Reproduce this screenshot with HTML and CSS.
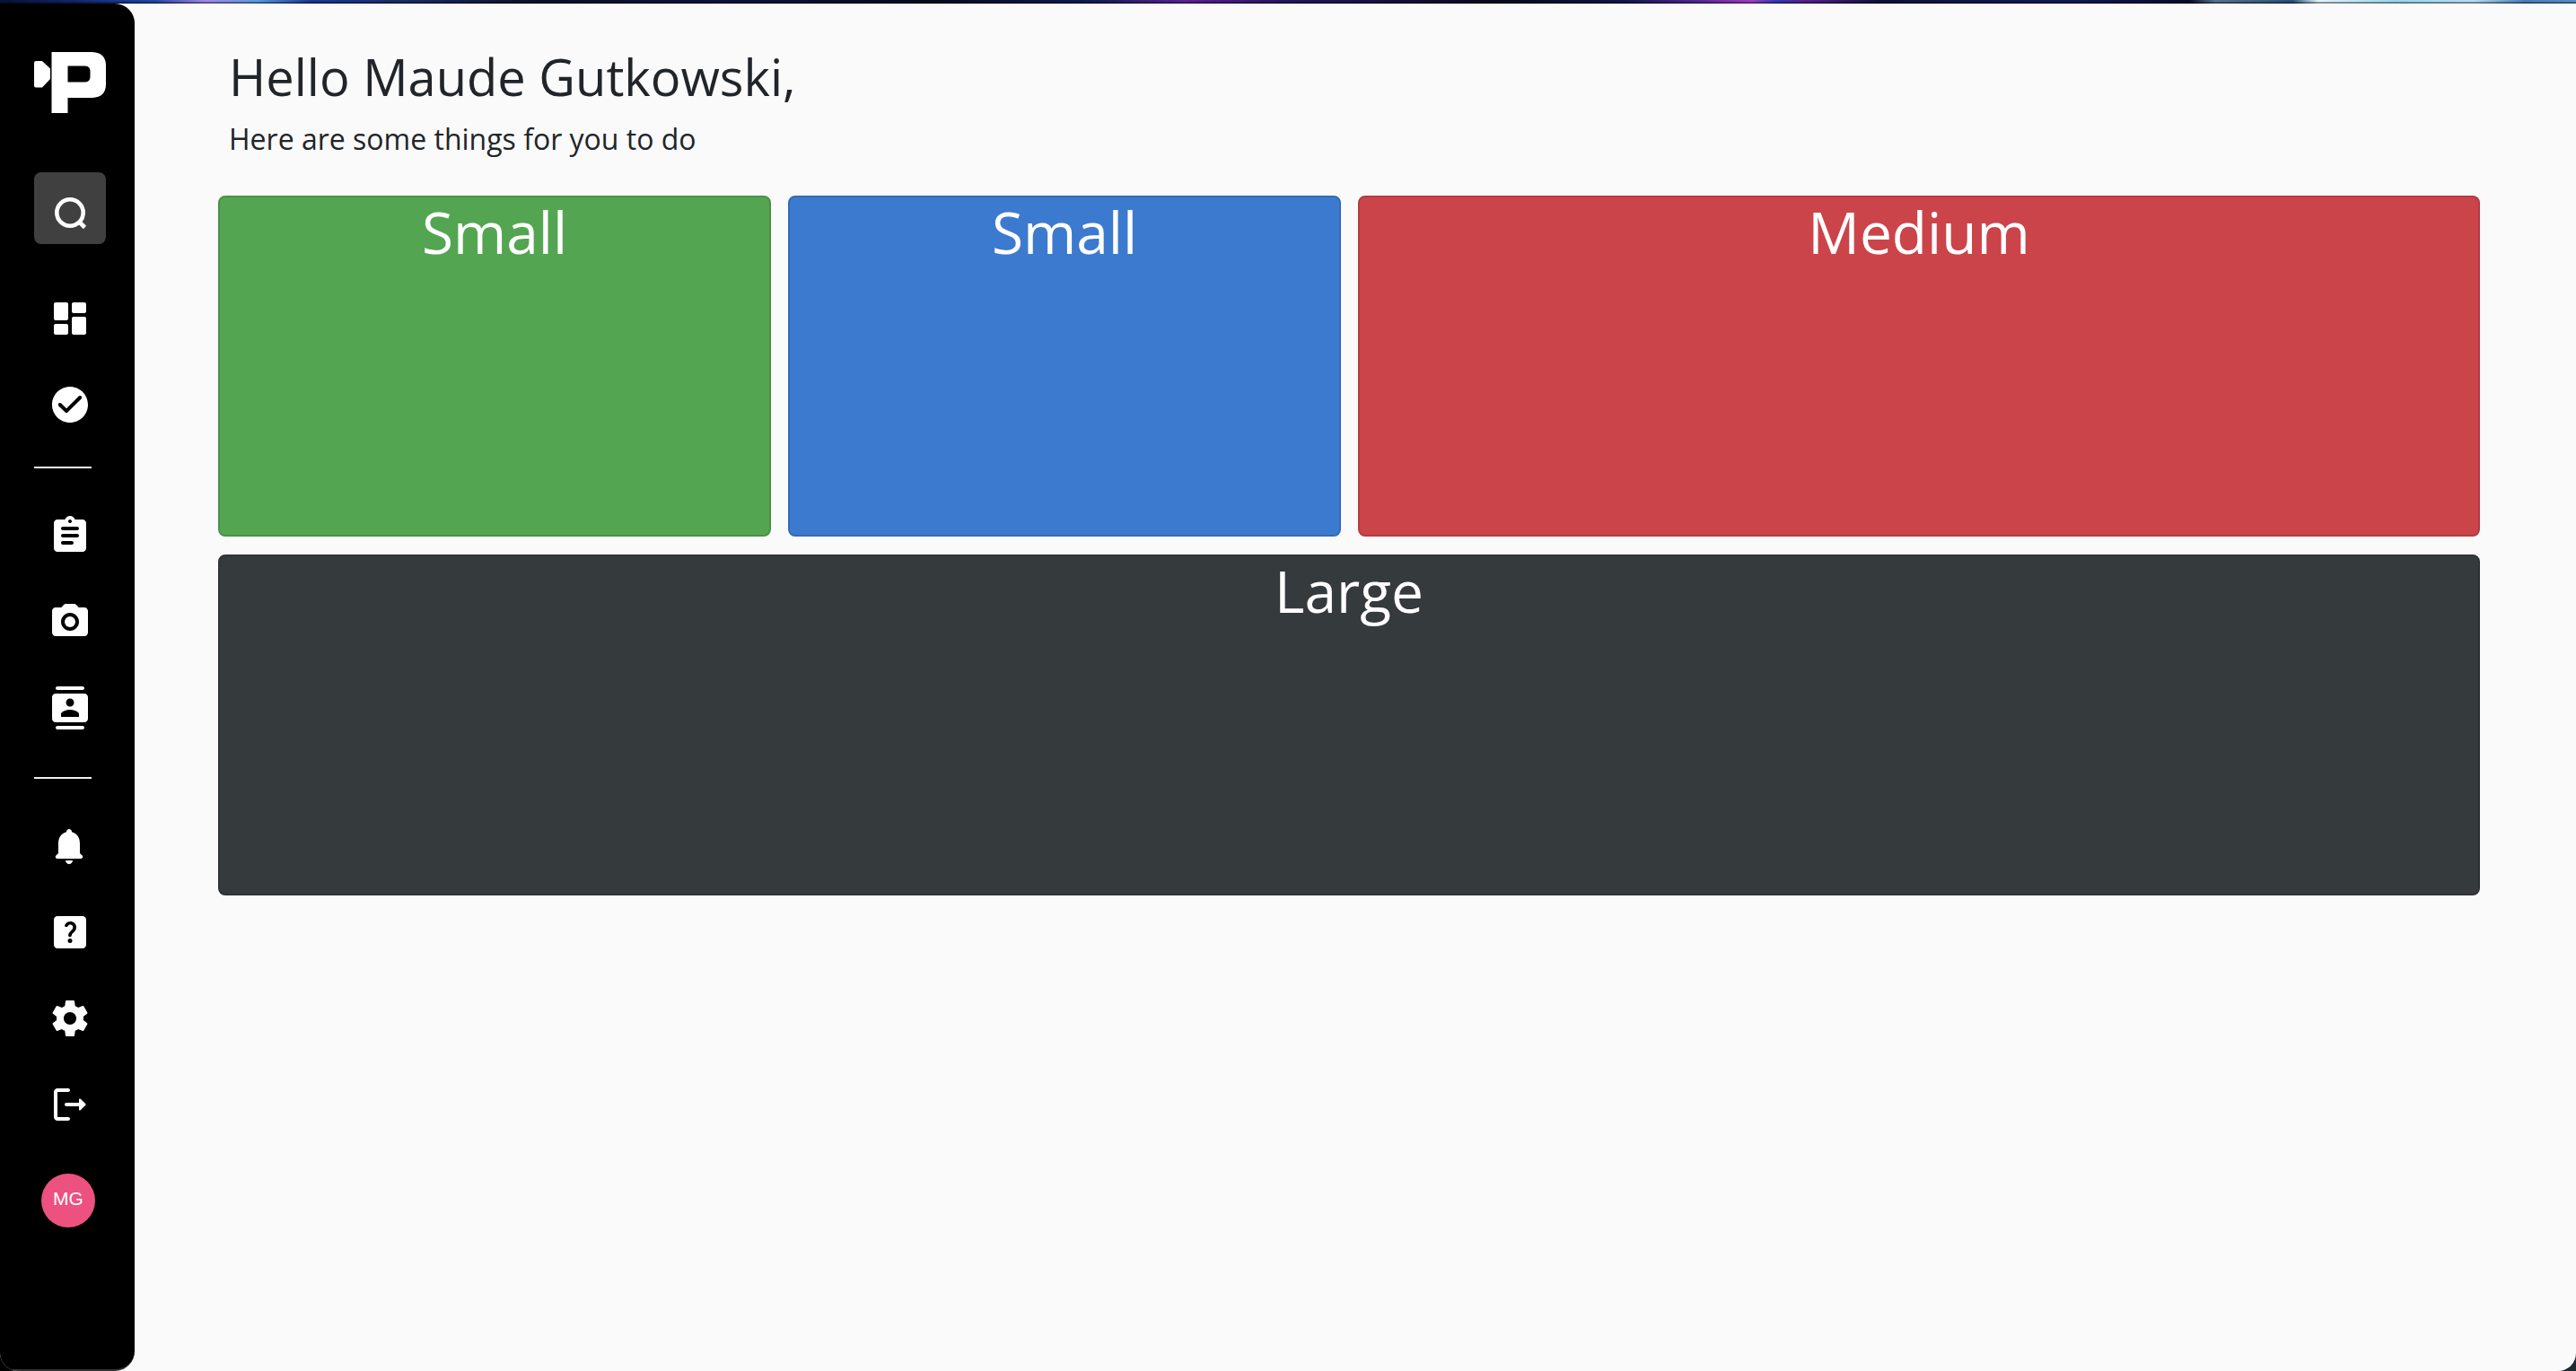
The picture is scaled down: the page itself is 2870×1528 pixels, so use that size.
FILE: index.html
```html
<!DOCTYPE html>
<html lang="en">
<head>
<meta charset="utf-8">
<title>Dashboard</title>
<link rel="stylesheet" href="styles.css">
</head>
<body>
<div class="window">
  <nav class="sidebar" aria-label="Main">
    <a class="logo" href="#" aria-label="Home">
      <svg viewBox="0 0 80 68" width="80" height="68"><path fill="#fff" d="M2 10h7l9 8.500V30L9 39.500H2Q0 39.500 0 37.500V12Q0 10 2 10zM19.500 0H65Q80 1 80 15V36Q80 50 65 51H37.500V68H19.500zM37.500 15.500V33.500H57Q62.500 33 62.500 27.500V21Q62.500 16 57 15.500z" fill-rule="evenodd"/></svg>
    </a>
    <button class="search" type="button" aria-label="Search">
      <svg viewBox="0 0 48 48" width="48" height="48" fill="none" stroke="#fff" stroke-width="4.600"><circle cx="24" cy="29" r="14.700"/><path d="M34 39l6.500 6.500"/></svg>
    </button>
    <div class="group">
      <a class="item" href="#" aria-label="Dashboard"><svg viewBox="0 0 24 24"><path d="M4 13h6c.55 0 1-.45 1-1V4c0-.55-.45-1-1-1H4c-.55 0-1 .45-1 1v8c0 .55.45 1 1 1zm0 8h6c.55 0 1-.45 1-1v-4c0-.55-.45-1-1-1H4c-.55 0-1 .45-1 1v4c0 .55.45 1 1 1zm10 0h6c.55 0 1-.45 1-1v-8c0-.55-.45-1-1-1h-6c-.55 0-1 .45-1 1v8c0 .55.45 1 1 1zM13 4v4c0 .55.45 1 1 1h6c.55 0 1-.45 1-1V4c0-.55-.45-1-1-1h-6c-.55 0-1 .45-1 1z"/></svg></a>
      <a class="item" href="#" aria-label="Tasks"><svg viewBox="0 0 24 24"><path d="M12 2C6.480 2 2 6.480 2 12s4.480 10 10 10 10-4.480 10-10S17.520 2 12 2zM9.290 16.290L5.700 12.700c-.39-.39-.39-1.020 0-1.410.39-.39 1.020-.39 1.410 0L10 14.170l6.880-6.880c.39-.39 1.020-.39 1.410 0 .39.39.39 1.020 0 1.410l-7.590 7.590c-.38.39-1.020.39-1.410 0z"/></svg></a>
    </div>
    <hr class="rule">
    <div class="group">
      <a class="item" href="#" aria-label="Assignments"><svg viewBox="0 0 24 24"><path d="M19 3h-4.180C14.400 1.840 13.300 1 12 1s-2.400.84-2.820 2H5c-1.100 0-2 .9-2 2v14c0 1.100.9 2 2 2h14c1.100 0 2-.9 2-2V5c0-1.100-.9-2-2-2zm-7 0c.55 0 1 .45 1 1s-.45 1-1 1-1-.45-1-1 .45-1 1-1zm1 14H8c-.55 0-1-.45-1-1s.45-1 1-1h5c.55 0 1 .45 1 1s-.45 1-1 1zm3-4H8c-.55 0-1-.45-1-1s.45-1 1-1h8c.55 0 1 .45 1 1s-.45 1-1 1zm0-4H8c-.55 0-1-.45-1-1s.45-1 1-1h8c.55 0 1 .45 1 1s-.45 1-1 1z"/></svg></a>
      <a class="item" href="#" aria-label="Photos"><svg viewBox="0 0 24 24"><circle cx="12" cy="12" r="3"/><path d="M20 4h-3.170l-1.240-1.350C15.220 2.240 14.680 2 14.120 2H9.880c-.56 0-1.100.24-1.480.65L7.170 4H4c-1.100 0-2 .9-2 2v12c0 1.100.9 2 2 2h16c1.100 0 2-.9 2-2V6c0-1.100-.9-2-2-2zm-8 13c-2.760 0-5-2.240-5-5s2.240-5 5-5 5 2.240 5 5-2.240 5-5 5z"/></svg></a>
      <a class="item" href="#" aria-label="Contacts"><svg viewBox="0 0 24 24"><path d="M19 0H5c-.55 0-1 .45-1 1s.45 1 1 1h14c.55 0 1-.45 1-1s-.45-1-1-1zM5 24h14c.55 0 1-.45 1-1s-.45-1-1-1H5c-.55 0-1 .45-1 1s.45 1 1 1zM20 4H4c-1.100 0-2 .9-2 2v12c0 1.100.9 2 2 2h16c1.100 0 2-.9 2-2V6c0-1.100-.9-2-2-2zm-8 2.750c1.240 0 2.250 1.010 2.250 2.250s-1.010 2.250-2.250 2.250S9.750 10.240 9.750 9 10.760 6.750 12 6.750zM17 17H7v-1.500c0-1.670 3.330-2.500 5-2.500s5 .83 5 2.500V17z"/></svg></a>
    </div>
    <hr class="rule">
    <div class="group">
      <a class="item" href="#" aria-label="Notifications"><svg viewBox="0 0 24 24"><path d="M11.500 22c1.100 0 2-.9 2-2h-4c0 1.100.9 2 2 2zm6-6v-5.500c0-3.070-1.630-5.640-4.500-6.320V4c0-.83-.67-1.500-1.500-1.500S10 3.170 10 4v.18C7.140 4.860 5.500 7.420 5.500 10.500V16l-1.290 1.290c-.63.63-.19 1.710.7 1.710h13.170c.89 0 1.340-1.080.71-1.710L17.500 16z"/></svg></a>
      <a class="item" href="#" aria-label="Help"><svg viewBox="0 0 24 24"><path fill-rule="evenodd" d="M5 3h14c1.100 0 2 .9 2 2v14c0 1.100-.9 2-2 2H5c-1.100 0-2-.9-2-2V5c0-1.100.9-2 2-2zM12 15.500a1.250 1.250 0 1 0 0 2.500 1.250 1.250 0 1 0 0-2.500zM12.150 6c-1.400 0-2.450.7-3 1.850-.23.470 0 1 .47 1.200.43.180.9 0 1.150-.42.300-.52.700-.85 1.380-.85.870 0 1.500.6 1.500 1.450 0 .9-.6 1.300-1.250 1.970-.75.780-1.350 1.400-1.350 2.500 0 .5.400.92.920.92.500 0 .88-.37.950-.85.080-.65.500-1 1.100-1.600.75-.77 1.480-1.600 1.480-2.950C15.500 7.370 14.050 6 12.150 6z"/></svg></a>
      <a class="item" href="#" aria-label="Settings"><svg viewBox="0 0 24 24"><path d="M19.430 12.980c.04-.32.070-.64.070-.98s-.03-.66-.07-.98l2.110-1.650c.19-.15.240-.42.120-.64l-2-3.460c-.12-.22-.39-.3-.61-.22l-2.490 1c-.52-.4-1.080-.73-1.690-.98l-.38-2.650C14.460 2.180 14.250 2 14 2h-4c-.25 0-.46.18-.49.42l-.38 2.650c-.61.25-1.170.59-1.690.98l-2.490-1c-.23-.09-.49 0-.61.22l-2 3.460c-.13.22-.07.490.12.640l2.110 1.650c-.04.320-.07.650-.07.980s.03.660.07.980l-2.110 1.650c-.19.150-.24.420-.12.640l2 3.460c.12.220.39.300.61.220l2.490-1c.52.400 1.080.73 1.690.98l.38 2.650c.03.240.24.420.49.420h4c.25 0 .46-.18.490-.42l.38-2.650c.61-.25 1.170-.59 1.690-.98l2.490 1c.23.090.49 0 .61-.22l2-3.460c.12-.22.070-.49-.12-.64l-2.110-1.650zM12 15.500c-1.930 0-3.500-1.570-3.500-3.500s1.570-3.500 3.500-3.500 3.500 1.570 3.500 3.500-1.570 3.500-3.500 3.500z"/></svg></a>
      <a class="item" href="#" aria-label="Log out"><svg viewBox="0 0 24 24"><path d="M5 5h6c.55 0 1-.45 1-1s-.45-1-1-1H5c-1.100 0-2 .9-2 2v14c0 1.100.9 2 2 2h6c.55 0 1-.45 1-1s-.45-1-1-1H5V5zM20.650 11.650l-2.790-2.790c-.32-.32-.86-.1-.86.350V11h-7c-.55 0-1 .45-1 1s.45 1 1 1h7v1.790c0 .45.540.67.850.35l2.790-2.790c.2-.19.200-.51.010-.7z"/></svg></a>
    </div>
    <button class="avatar" type="button">MG</button>
  </nav>
  <main class="content">
    <header class="greeting">
      <h1>Hello Maude Gutkowski,</h1>
      <p>Here are some things for you to do</p>
    </header>
    <div class="cards">
      <section class="card green"><h2>Small</h2></section>
      <section class="card blue"><h2>Small</h2></section>
      <section class="card red"><h2>Medium</h2></section>
      <section class="card dark"><h2>Large</h2></section>
    </div>
  </main>
</div>
</body>
</html>
```
FILE: styles.css
```css
* { box-sizing: border-box; }

body {
  margin: 0;
  min-height: 100vh;
  display: flex;
  padding: 4px 0 0;
  font-family: "Open Sans", sans-serif;
  color: #212529;
  background:
    linear-gradient(transparent 2px, rgba(0, 0, 0, .4) 2px) top / 100% 4px no-repeat,
    linear-gradient(90deg, #061238 0, #12286c 3%, #2346a8 6%, #a08ce0 8%, #5a9be0 10%, #1c3a94 12%, #1a2c60 16%, #0c0e28 21%, #0a1440 28%, #050a20 36%, #0a1c50 42%, #5c2290 46%, #241660 50%, #08081c 58%, #0e1648 63%, #5a2898 66%, #a040c0 68%, #2c3cb0 69%, #5a2090 70%, #0c1238 73%, #0e1c58 80%, #060a2c 85%, #5a7490 86%, #2c5078 89%, #e0f4fc 90%, #9ad4ec 93%, #b8dcf4 96%, #4a80b8 98%, #5a90c4 100%) top / 100% 4px no-repeat,
    linear-gradient(90deg, #000 50%, #1c2a32);
}

.window {
  flex: 1;
  display: flex;
  overflow: hidden;
  background: #fafafa;
  border-radius: 0 0 20px 20px;
}

.sidebar {
  width: 150px;
  padding: 54px 0 0 38px;
  background: #000;
  border-bottom: 2px solid #333;
  border-radius: 0 22px 22px 0;
  display: flex;
  flex-direction: column;
  align-items: flex-start;
}

.sidebar svg { display: block; }

.search {
  width: 80px;
  height: 80px;
  margin: 66px 0 35px;
  padding: 0;
  border: 0;
  border-radius: 8px;
  background: #404040;
  display: flex;
  align-items: center;
  justify-content: center;
}

.item {
  width: 80px;
  height: 96px;
  display: flex;
  align-items: center;
  justify-content: center;
}

.item svg {
  width: 48px;
  height: 48px;
  fill: #fff;
}

.rule {
  width: 64px;
  height: 2px;
  margin: 21px 0 27px;
  border: 0;
  background: #eee;
}

.group + .rule ~ .group + .rule { margin-top: 29px; }

.avatar {
  width: 60px;
  height: 60px;
  margin: 29px 8px;
  padding: 0 0 4px;
  border: 0;
  border-radius: 50%;
  background: #ec5180;
  color: #fff;
  font: 21px "Liberation Sans", sans-serif;
}

.content {
  flex: 1;
  padding: 48px 107px 48px 93px;
}

.greeting { padding: 0 12px 43px; }

h1, h2, p {
  margin: 0;
  font-weight: 400;
}

h1 {
  font-size: 56px;
  line-height: 67px;
}

.greeting p {
  margin-top: 16px;
  font-size: 32px;
  line-height: 40px;
}

.cards {
  display: grid;
  grid-template-columns: 616fr 616fr 1250fr;
  gap: 20px 19px;
}

.card {
  min-height: 380px;
  border: 2px solid;
  border-radius: 8px;
  color: #fff;
  text-align: center;
}

.card h2 {
  font-size: 64px;
  line-height: 77px;
}

.green { background: #54a551; border-color: #4a9148; }
.blue { background: #3c7acf; border-color: #346bb6; }
.red { background: #cb444a; border-color: #b33c41; }
.dark { background: #353a3d; border-color: #2f3336; grid-column: 1 / -1; }
```
